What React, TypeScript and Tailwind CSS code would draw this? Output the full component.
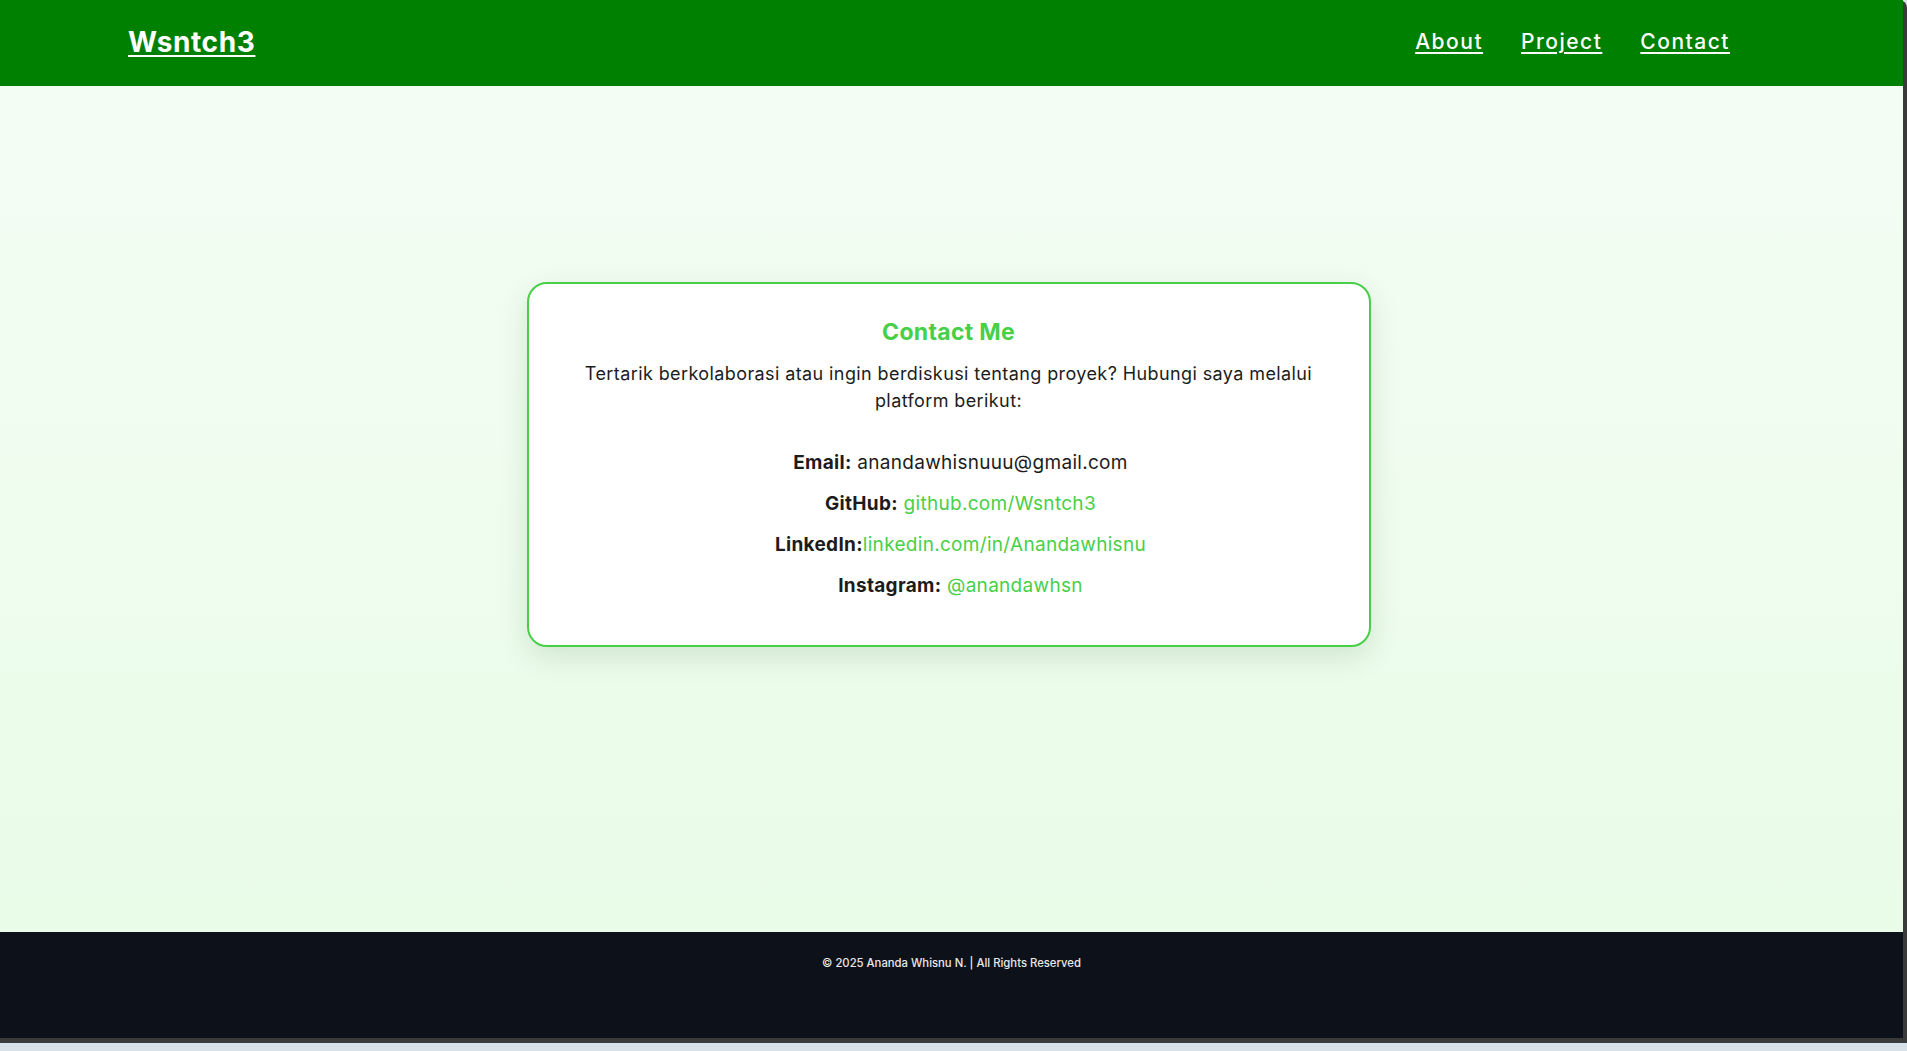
import React from 'react';

const font = { fontFamily: 'Inter, "Noto Sans", sans-serif' };

const links = [
  { label: 'Email:', value: 'anandawhisnuuu@gmail.com', link: false, space: true },
  { label: 'GitHub:', value: 'github.com/Wsntch3', link: true, space: true },
  { label: 'LinkedIn:', value: 'linkedin.com/in/Anandawhisnu', link: true, space: false },
  { label: 'Instagram:', value: '@anandawhsn', link: true, space: true },
];

const App: React.FC = () => {
  return (
    <div className="w-[1907px] h-[1051px] bg-[#d7e1e7] overflow-hidden" style={font}>
      <div className="h-[1043px] bg-[#3a3a3a] rounded-tr-[8px] pr-[4px] pb-[5px]">
        <div className="h-full flex flex-col">
          <header className="h-[86px] shrink-0 bg-[#008000] flex items-center justify-between pl-[128px] pr-[173px] pb-[3px]">
            <a className="text-white text-[28px] font-bold underline underline-offset-[3px] decoration-2 tracking-[0.6px]">Wsntch3</a>
            <nav className="flex items-center gap-[38px]">
              <a className="text-white text-[21px] font-medium underline underline-offset-[3px] decoration-2 tracking-[1.5px]">About</a>
              <a className="text-white text-[21px] font-medium underline underline-offset-[3px] decoration-2 tracking-[1.5px]">Project</a>
              <a className="text-white text-[21px] font-medium underline underline-offset-[3px] decoration-2 tracking-[1.5px]">Contact</a>
            </nav>
          </header>

          <main className="flex-1 bg-gradient-to-b from-[#f4fdf4] to-[#e9fce8] flex justify-center pt-[196px] pr-[6px]">
            <section className="w-[844px] h-[365px] bg-white border-2 border-[#48cf48] rounded-[20px] shadow-[0_10px_30px_rgba(0,60,0,0.12)] px-[40px] pt-[32px] text-center">
              <h2 className="text-[23px] font-bold text-[#48cf48] leading-[32px] tracking-[0.3px]">Contact Me</h2>
              <p className="mt-[12px] text-[18px] text-[#1c1c1c] leading-[27px] tracking-[0.4px] px-[2px]">
                Tertarik berkolaborasi atau ingin berdiskusi tentang proyek? Hubungi saya melalui platform berikut:
              </p>
              <ul className="mt-[35px] pl-[24px] flex flex-col gap-[14px]">
                {links.map((l) => (
                  <li key={l.label} className="text-[19px] leading-[27px] text-[#1c1c1c] tracking-[0.3px]">
                    <strong className="font-bold">{l.label}</strong>
                    {l.space ? ' ' : ''}
                    {l.link ? (
                      <a className="text-[#48cf48]">{l.value}</a>
                    ) : (
                      <span>{l.value}</span>
                    )}
                  </li>
                ))}
              </ul>
            </section>
          </main>

          <footer className="h-[106px] shrink-0 bg-[#0d111a] pt-[23px] text-center">
            <p className="text-[11.3px] font-medium text-[#e8e8e8]">© 2025 Ananda Whisnu N. | All Rights Reserved</p>
          </footer>
        </div>
      </div>
    </div>
  );
};

export default App;
